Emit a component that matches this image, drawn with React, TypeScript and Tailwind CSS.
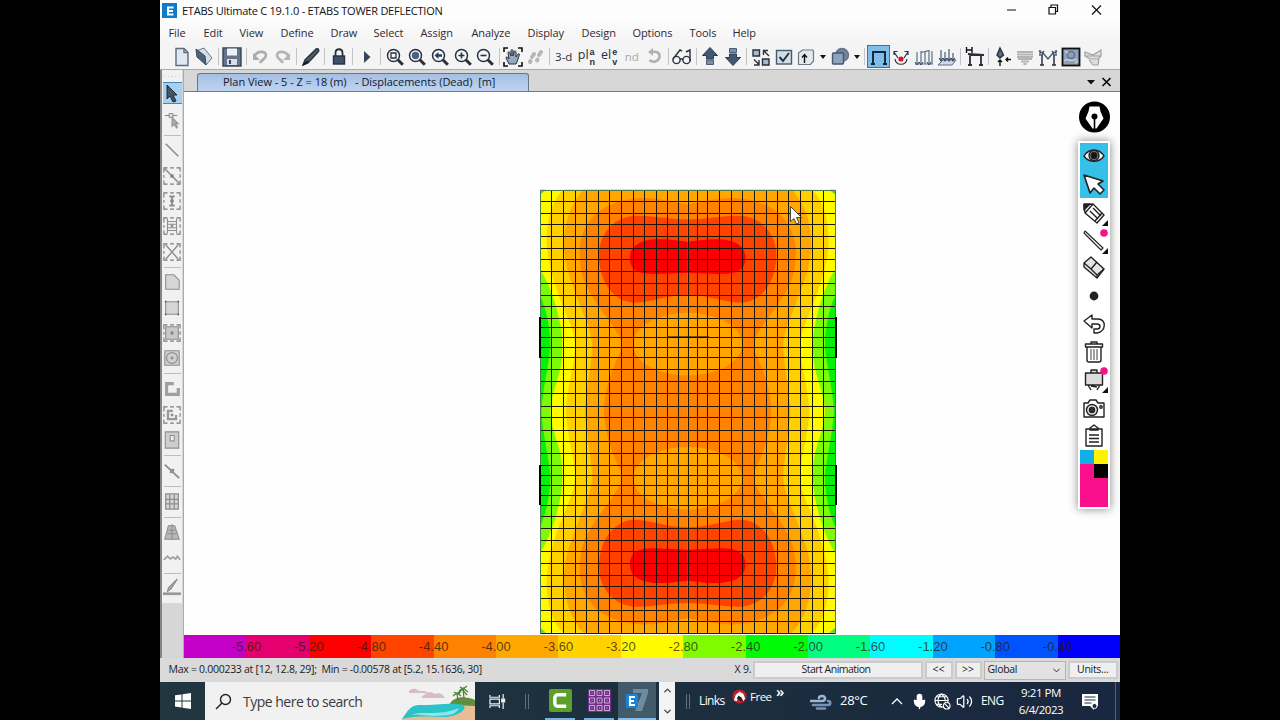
import type { ReactNode } from "react"
import { ChevronUp, ChevronDown, Mic, Volume2 } from "lucide-react"

// -------------------------
// Data
// -------------------------

const menus = [
  { label: "File", w: "w-[35px]" },
  { label: "Edit", w: "w-[36px]" },
  { label: "View", w: "w-[41px]" },
  { label: "Define", w: "w-[50px]" },
  { label: "Draw", w: "w-[43px]" },
  { label: "Select", w: "w-[47px]" },
  { label: "Assign", w: "w-[51px]" },
  { label: "Analyze", w: "w-[56px]" },
  { label: "Display", w: "w-[54px]" },
  { label: "Design", w: "w-[51px]" },
  { label: "Options", w: "w-[57px]" },
  { label: "Tools", w: "w-[43px]" },
  { label: "Help", w: "w-[30px]" }
]

const legend = [
  { bg: "bg-[#c400c8]", label: "-5.60" },
  { bg: "bg-[#e4006e]", label: "-5.20" },
  { bg: "bg-[#fd0000]", label: "-4.80" },
  { bg: "bg-[#ff4400]", label: "-4.40" },
  { bg: "bg-[#ff8200]", label: "-4.00" },
  { bg: "bg-[#ffa800]", label: "-3.60" },
  { bg: "bg-[#ffd200]", label: "-3.20" },
  { bg: "bg-[#fffc00]", label: "-2.80" },
  { bg: "bg-[#80fc00]", label: "-2.40" },
  { bg: "bg-[#00fa08]", label: "-2.00" },
  { bg: "bg-[#00ff80]", label: "-1.60" },
  { bg: "bg-[#00fcff]", label: "-1.20" },
  { bg: "bg-[#00a4ff]", label: "-0.80" },
  { bg: "bg-[#0054ff]", label: "-0.40" },
  { bg: "bg-[#0000fa]", label: "" }
]

// mesh lines, in thirds of a pixel
const gridX = [30, 64, 100, 134, 169, 205, 238, 274, 309, 343, 379, 412, 443, 473, 502, 531, 568, 602, 637, 671, 707, 742, 775, 811, 847, 880, 916]
const gridY = [29, 64, 100, 133, 169, 204, 238, 274, 308, 344, 379, 415, 442, 472, 502, 532, 566, 603, 640, 677, 712, 749, 784, 820, 856, 886, 916, 946, 975, 1009, 1045, 1079, 1114, 1148, 1186, 1219, 1253, 1289, 1323, 1359]

// -------------------------
// Small pieces
// -------------------------

function Tool({ children, active }: { children: ReactNode; active?: boolean }) {
  return (
    <div className={active
      ? "w-[22.66px] h-[23px] shrink-0 flex items-center justify-center bg-[#7fbdea] border border-[#2f78b5]"
      : "w-[22.66px] h-[23px] shrink-0 flex items-center justify-center"}>
      <svg viewBox="0 0 22 22" className="w-[22px] h-[22px] shrink-0" fill="none" stroke="#27303f" strokeWidth="1.4">
        {children}
      </svg>
    </div>
  )
}

function Sep() {
  return (
    <div className="w-[5.3px] h-[17px] shrink-0 flex justify-center">
      <div className="w-px h-full bg-[#c4c4c6]" />
    </div>
  )
}

function Caret() {
  return (
    <div className="w-[11px] shrink-0 flex justify-center">
      <svg viewBox="0 0 6 4" className="w-[6px] h-[4px]"><path d="M0 0h6L3 4z" fill="#111" /></svg>
    </div>
  )
}

function Magnifier({ children }: { children?: ReactNode }) {
  return (
    <Tool>
      <circle cx="9.5" cy="9.5" r="6" fill="#f4f6f8" strokeWidth="1.5" />
      <path d="M13.800 13.800l5 5" strokeWidth="3" />
      {children}
    </Tool>
  )
}

// view name with its last two letters stacked
function StackedLabel({ head, a, b }: { head: string; a: string; b: string }) {
  return (
    <div className="w-[22.66px] shrink-0 flex justify-center items-center text-[12.5px] leading-none text-[#27303f]">
      <span className="mt-[-2px]">{head}</span>
      <span className="ml-px flex flex-col text-[9px] leading-[10px] font-bold font-['Liberation_Sans',sans-serif]"><span>{a}</span><span>{b}</span></span>
    </div>
  )
}

function SideTool({ children, h }: { children: ReactNode; h: string }) {
  return (
    <div className={"w-[19px] shrink-0 flex items-center justify-center " + h}>
      <svg viewBox="0 0 20 20" className="w-[18px] h-[18px]" fill="none" stroke="#8d8d8d" strokeWidth="1.2">
        {children}
      </svg>
    </div>
  )
}

function SideSep() {
  return <div className="w-[17px] h-px bg-[#bcbcbc] shrink-0" />
}

function DashBox() {
  return <path d="M1 6V1h4M8 1h4M15 1h4v4M19 8v4M19 15v4h-4M12 19H8M5 19H1v-4M1 12V9" stroke="#777" />
}

function PenTool({ children, h }: { children: ReactNode; h: string }) {
  return (
    <div className={"w-full shrink-0 flex items-center justify-center " + h}>
      <svg viewBox="0 0 28 26" className="w-[28px] h-[26px] shrink-0" fill="none" stroke="#222" strokeWidth="1.4" strokeLinejoin="round">
        {children}
      </svg>
    </div>
  )
}

// -------------------------
// Contour plot
// -------------------------

function Quarter() {
  return (
    <>
      <path d="M30 29H474V694H30z" fill="#fffa00" />
      <path d="M100 29C68 60 50 110 50 190C55 260 78 330 100 380C120 430 135 460 135 500C132 570 112 610 108 694H474V29z" fill="#ffd000" />
      <path d="M160 29C122 70 100 130 102 205C106 270 130 320 150 375C172 430 186 460 186 500C184 570 168 620 165 694H474V29z" fill="#ffa600" />
      <path d="M474 73C430 66 380 52 330 54C250 60 190 90 163 150C145 190 145 240 158 290C180 360 245 420 274 480V512C258 540 225 610 222 694H474z" fill="#ff8200" />
      <path d="M30 268C55 305 78 370 88 420C98 460 100 510 92 560C82 610 64 640 61 694H30z" fill="#7dfa0a" />
      <path d="M30 345C50 390 62 450 61 500C58 550 40 610 34 694H30z" fill="#06f00c" />
      <path d="M474 118C420 118 380 108 320 107C260 107 207 155 207 225C207 310 255 366 312 368C370 366 410 345 474 345z" fill="#ff4200" />
      <path d="M474 185C450 184 430 178 385 178C335 178 300 196 300 232C300 268 318 282 375 282L474 278z" fill="#fb0000" />
      <path d="M474 398C380 400 309 440 309 494C312 545 380 586 474 586z" fill="#ffa600" />
      <path d="M30 29h18L30 44z" fill="#55dd33" />
    </>
  )
}

function Contour() {
  return (
    <svg viewBox="0 0 320 454" className="w-[320px] h-[454px] shrink-0">
      <g transform="scale(.33333)">
        <Quarter />
        <g transform="translate(946 0) scale(-1 1)"><Quarter /></g>
        <g transform="translate(0 1387) scale(1 -1)"><Quarter /></g>
        <g transform="translate(946 1387) scale(-1 -1)"><Quarter /></g>
      </g>

      {/* mesh */}
      <g fill="#1c1400" shapeRendering="crispEdges">
        {gridX.map((x) => <rect key={x} x={Math.round(x / 3)} y="10" width="1" height="444" />)}
        {gridY.map((y) => <rect key={y} x="10" y={Math.round(y / 3)} width="296" height="1" />)}
      </g>
      <path d="M10 10.500H306M10.500 10V454M305.500 10V454" stroke="#4d7a4a" fill="none" />

      {/* walls */}
      <g fill="#000">
        <rect x="9" y="137" width="2" height="41" />
        <rect x="305" y="137" width="2" height="41" />
        <rect x="9" y="285" width="2" height="40" />
        <rect x="305" y="285" width="2" height="40" />
        <rect x="138" y="156.500" width="41" height="1.500" />
      </g>

      <path d="M260.500 26.500v15l3.500-3 2.500 5.500 2.500-1-2.500-5.500h5z" fill="#fff" stroke="#222" strokeWidth=".8" />
    </svg>
  )
}

// -------------------------
// Bars
// -------------------------

function Toolbar() {
  return (
    <div className="h-[25px] pl-[10.2px] flex items-center bg-[#f4f4f5]">
      <Tool><path d="M5 2.500h8l4 4v13H5z" fill="#dfe8f1" stroke="#5d6b7c" /><path d="M13 2.500v4h4" stroke="#5d6b7c" /></Tool>
      <Tool><path d="M3 5l8-3 8 10-6 7z" fill="#d3dee9" stroke="#68788a" strokeWidth="1" /><path d="M3 3l9 7 1 9-9-8z" fill="#4c627d" stroke="#35475d" strokeWidth="1" /></Tool>
      <Sep />
      <Tool><path d="M2 2h18v18H2z" fill="#64748a" stroke="#35445a" /><path d="M6 2.500h10v7H6z" fill="#eef2f5" stroke="none" /><path d="M6 13h10v6H6z" fill="#d9dfe6" stroke="none" /><path d="M8 14h2v4H8z" fill="#35445a" stroke="none" /></Tool>
      <Sep />
      <Tool><path d="M5 11c3-7 12-6 12-2 0 4-4 4-6 8" stroke="#a9abad" strokeWidth="2.600" /><path d="M4 7v7h7z" fill="#a9abad" stroke="none" /></Tool>
      <Tool><path d="M17 11C14 4 5 5 5 9c0 4 4 4 6 8" stroke="#b1b3b5" strokeWidth="2.600" /><path d="M18 7v7h-7z" fill="#b1b3b5" stroke="none" /></Tool>
      <Sep />
      <Tool><path d="M3 19l2-5L16 3c2-1 4 1 2 3L8 17z" fill="#4c5a6c" /><path d="M3 19l5-4" stroke="#111" /></Tool>
      <Sep />
      <Tool><rect x="5.500" y="10" width="11" height="8" fill="#3d536d" /><path d="M7.500 10V7c0-5 7-5 7 0v3" strokeWidth="1.800" /></Tool>
      <Sep />
      <Tool><path d="M8 5l6.500 6L8 17z" fill="#34475f" stroke="none" /></Tool>
      <Sep />
      <Magnifier><path d="M7 7h5v5H7z" strokeWidth="1.300" /></Magnifier>
      <Magnifier><circle cx="9.500" cy="9.500" r="3" fill="#4b627d" stroke="#4b627d" /></Magnifier>
      <Magnifier><path d="M5.500 9.500l4-3.500v2.300h3.500v2.400H9.500V13z" fill="#27405f" stroke="none" /></Magnifier>
      <Magnifier><path d="M6.500 9.500h6M9.500 6.500v6" strokeWidth="1.600" /></Magnifier>
      <Magnifier><path d="M6.500 9.500h6" strokeWidth="1.600" /></Magnifier>
      <Sep />
      <Tool>
        <path d="M2 6V2h4M16 2h4v4M20 16v4h-4M6 20H2v-4" stroke="#111" strokeWidth="1.600" />
        <path d="M7 18l-3-6c0-2 2-1 3 1L6 7c0-2 2-1 2 0l1 3V5c0-2 2-2 2 0v5l1-4c0-2 2-1 2 0v5l2-3c1-1 2 0 1 2l-2 6-1 2z" fill="#98a9bd" strokeWidth="1" />
      </Tool>
      <Tool><path d="M7 11l2-3M14 9l2-3M5 16l.500-1M12 14.500l.500-1" stroke="#b7b7b8" strokeWidth="4" strokeLinecap="round" /></Tool>
      <Sep />
      <div className="w-[22.66px] shrink-0 text-center text-[11.5px] text-[#27303f]">3-d</div>
      <StackedLabel head="pl" a="a" b="n" />
      <StackedLabel head="el" a="e" b="v" />
      <div className="w-[22.66px] shrink-0 text-center text-[11.5px] text-[#a9a9aa]">nd</div>
      <Tool><path d="M9 6c5-1 8 1 7.500 5-1 5-7 6-10 3" stroke="#b0b0b1" strokeWidth="2.600" /><path d="M10 2v8L5 6z" fill="#b0b0b1" stroke="none" /></Tool>
      <Sep />
      <Tool><circle cx="5.500" cy="14" r="3.600" /><circle cx="15.500" cy="14" r="3.600" /><path d="M2 13l7-9 2 1M9 13h3M19 15V4l-4 2" /></Tool>
      <Sep />
      <Tool><path d="M11 1.500l7.500 8h-4V13h-7V9.500h-4z" fill="#435873" stroke="#2b3a4e" strokeWidth="1" /><path d="M7.500 14h7v4.500h-7z" fill="#7b8fa8" stroke="#4b5f79" strokeWidth="1" /></Tool>
      <Tool>
        <path d="M7.500 2.500h7v4h-7z" fill="#7b8fa8" stroke="#4b5f79" strokeWidth="1" />
        <path d="M11 19.500l7.500-8h-4V8h-7v3.500h-4z" fill="#435873" stroke="#2b3a4e" strokeWidth="1" />
      </Tool>
      <Sep />
      <Tool><path d="M3 4h6.500v6H3zM12.500 13h6.500v6h-6.500z" fill="#a9b9cb" /><path d="M19 10l-5-5M13.500 9V4.500H18M4 13.500l4.500 4.500M9 14v5H4" /></Tool>
      <Tool><rect x="3.500" y="4.500" width="15" height="13.500" fill="#cfdde7" stroke="#46596c" /><path d="M6.500 11l3.500 4 6-8" strokeWidth="2" /></Tool>
      <Tool><path d="M3.500 7l4-3h10l1 1v10l-3 3.500h-12z" fill="#e2e9ef" stroke="#6c7987" strokeWidth="1.200" /><path d="M9.500 17V9M7 11.500L9.500 8.500l2.500 3" stroke="#111" /></Tool>
      <Caret />
      <Tool><circle cx="13" cy="9" r="6.500" fill="#71849c" stroke="#62748c" /><rect x="3.500" y="7" width="11" height="11" rx="1" fill="#8fa3ba" stroke="#45586f" /></Tool>
      <Caret />
      <Sep />
      <Tool active><path d="M3 18h4M15 18h4M5 18V6h12v12" strokeWidth="1.900" stroke="#162638" /></Tool>
      <Tool><path d="M4 6l4 6M18 6l-4 6M4 9V5.500h3.500M18 9V5.500h-3.500" strokeWidth="1.200" /><path d="M5 13c1 7 11 7 12 0" strokeWidth="1.200" /><circle cx="11" cy="13" r="1.900" fill="#d5122a" stroke="#d5122a" /></Tool>
      <Tool><path d="M2 18h18M4 18V6M8 18V5M12 18V5M16 18V4M8 6c3 1 5-2 8-1M19 18V5" stroke="#5c6f87" strokeWidth="1.200" /><path d="M2 16l2 3 2-3M6 16l2 3 2-3M14 16l2 3 2-3" stroke="#34475f" strokeWidth="1" /></Tool>
      <Tool><path d="M2 19l5-5h13l-4 5z" fill="#cfd9e4" stroke="#5c6f87" strokeWidth="1" /><path d="M5 4v11M9 6v9M13 3v12M17 7v8M3 12l2 3 2-3M7 12l2 3 2-3M11 12l2 3 2-3M15 12l2 3 2-3" stroke="#3b4e67" strokeWidth="1.100" /></Tool>
      <Sep />
      <Tool><path d="M2.500 1v6M8 1v6M2.500 4h5.500" stroke="#111" /><path d="M6 19V9h11v10M4 19h4M15 19h4M4 8l16 1" strokeWidth="1.800" /></Tool>
      <Sep />
      <Tool><path d="M8 2l3.500 7L8 12 5 9z" fill="#596a7d" /><path d="M8 20v-6M6 16l2-2 2 2M19 13.500h-5M16 11.500l-2 2 2 2" stroke="#111" /></Tool>
      <Tool><path d="M3 6h16M3 8.500h16M3 11h16M4 13h14M7 15.500h8M9.500 18h3" stroke="#b4b4b5" strokeWidth="1.900" /></Tool>
      <Tool><path d="M5 19V8M17 19V8M3 19h4M15 19h4" strokeWidth="1.500" /><path d="M2 5l4 2 5 6 5-6 4-2M5 8l2-3M17 8l-2-3M3 4v6M19 4v6" stroke="#3d5a72" /></Tool>
      <Tool><rect x="2.500" y="2.500" width="17" height="17" fill="#8ea1b8" stroke="#111" strokeWidth="1.800" /><circle cx="11" cy="9" r="3.500" stroke="#5b708a" /><path d="M4 15c3-4 7 2 13-2M5 5l3 2M15 17l3-2" stroke="#c9d3df" /></Tool>
      <Tool><path d="M3 6l8 3 8-5v6H3zM3 10l5 3h8l3-3M7 14l4 5h5l1-6" fill="#dededf" stroke="#a2a2a3" strokeWidth="1.200" /></Tool>
    </div>
  )
}

function Sidebar() {
  return (
    <div className="w-[24px] shrink-0 flex flex-col items-start bg-[#d6d6d6] border-l-2 border-l-[#858588] border-r border-r-[#aaaaab]">
      <div className="w-[20px] h-[533px] shrink-0 flex flex-col items-center bg-[#f1f1f1]">
        <div className="h-[12px] pt-[5px] shrink-0 text-[#aaa] text-[7px] leading-[3px]">· · · · ·</div>
        <div className="w-[19px] h-[22px] shrink-0 bg-[#a5d0f0] border-y border-[#4387bd] flex justify-center items-center">
          <svg viewBox="0 0 12 19" className="w-[12px] h-[19px]"><path d="M1 1v14l3-3 3 6 3-1-3-6h4z" fill="#45566b" stroke="#1e2938" /></svg>
        </div>
        <SideTool h="h-[31px]"><path d="M2 5h14" /><rect x="7" y="3" width="4" height="4" fill="#eee" /><path d="M10 7v10l3-2 2 4 1-1-2-4h3z" fill="#aaa" stroke="#999" /></SideTool>
        <SideSep />
        <SideTool h="h-[27px]"><path d="M3 3l14 14" strokeWidth="1.800" /></SideTool>
        <SideTool h="h-[25px]"><DashBox /><path d="M2 2l16 16" strokeWidth="1.800" /><circle cx="10" cy="10" r="1.500" fill="#777" /></SideTool>
        <SideTool h="h-[25px]"><DashBox /><path d="M7 5h6M7 15h6M10 5v10" strokeWidth="2" /><circle cx="10" cy="10" r="1.500" fill="#777" /></SideTool>
        <SideTool h="h-[26px]"><DashBox /><path d="M5 2v16M15 2v16M5 5h10M5 8h10M5 12h10M5 15h10" /><circle cx="10" cy="10" r="1" /></SideTool>
        <SideTool h="h-[25px]"><DashBox /><path d="M3 2l14 16M17 2L3 18" strokeWidth="1.500" /></SideTool>
        <div className="h-[3px] shrink-0" />
        <SideSep />
        <SideTool h="h-[28px]"><path d="M3 2h9l6 6v10H3z" fill="#d6d6d6" /></SideTool>
        <SideTool h="h-[24px]"><path d="M3 3h14v14H3z" fill="#d6d6d6" /><path d="M2 3h2M16 3h2M2 17h2M16 17h2" stroke="#666" strokeWidth="2" /></SideTool>
        <SideTool h="h-[25px]"><DashBox /><path d="M3 3h14v14H3z" fill="#c8c8c8" /><circle cx="10" cy="10" r="1.300" fill="#777" /></SideTool>
        <SideTool h="h-[26px]"><path d="M2 2h16v16H2z" fill="#d0d0d0" /><circle cx="10" cy="10" r="6" /><circle cx="10" cy="10" r="1" fill="#777" /></SideTool>
        <div className="h-[2px] shrink-0" />
        <SideSep />
        <SideTool h="h-[29px]"><path d="M12 4H4v12h13V9" stroke="#a0a0a0" strokeWidth="3.500" /></SideTool>
        <SideTool h="h-[24px]"><DashBox /><path d="M11 5.500H5.500v9h9V10" stroke="#999" strokeWidth="2.600" /><circle cx="10" cy="10" r="1" fill="#777" /></SideTool>
        <SideTool h="h-[25px]"><path d="M2.500 1h15v18h-15z" fill="#cecece" /><rect x="8" y="5" width="4.500" height="6" fill="#eee" /></SideTool>
        <div className="h-[3px] shrink-0" />
        <SideSep />
        <SideTool h="h-[30px]"><path d="M2 3l16 15M12 8l-4 4" strokeWidth="2" /><circle cx="10" cy="10" r="1.800" fill="#999" /></SideTool>
        <SideSep />
        <SideTool h="h-[30px]"><path d="M3 1h14v17H3zM7.500 1v17M12.500 1v17M3 7h14M3 12h14" fill="#d6d6d6" strokeWidth="1.400" /></SideTool>
        <SideSep />
        <SideTool h="h-[28px]"><path d="M6 3h7l5 15H2z" fill="#b8b8b8" /><path d="M10 1v18M6 8h8M5 12h10" /></SideTool>
        <SideTool h="h-[23px]"><path d="M1 12l4-4 3 3 3-2 3 2 2-3 3 4" stroke="#a0a0a0" strokeWidth="2" /></SideTool>
        <div className="h-[4px] shrink-0" />
        <SideSep />
        <SideTool h="h-[26px]"><path d="M16 1L6 11l-1 4 4-3z" fill="#aaa" /><path d="M0 17.500h20" stroke="#999" strokeWidth="3" /></SideTool>
      </div>
    </div>
  )
}

function PenPalette() {
  return (
    <div className="absolute left-[893px] top-[9px] w-[34px] flex flex-col items-center">
      <svg viewBox="0 0 32 32" className="w-[32px] h-[32px]">
        <circle cx="16.500" cy="16" r="15.500" fill="#000" />
        <path d="M11.500 5.500h10l1 5 3 7-7 10h-4l-7-10 3-7z" fill="#fff" />
        <path d="M16.500 17v12" stroke="#000" strokeWidth="1.600" />
        <circle cx="16.500" cy="15.500" r="3" fill="#000" />
      </svg>
      <div className="mt-[8px] w-[32px] h-[368px] border-2 border-white bg-white shadow-[0_0_9px_#888] flex flex-col items-center">
        <div className="w-full h-[55px] shrink-0 bg-[#35bfe9]">
          <PenTool h="h-[26px]">
            <path d="M4 13c5-8 15-8 20 0-5 7-15 7-20 0z" fill="#fff" />
            <circle cx="14" cy="12.500" r="5" fill="#aaa" /><circle cx="14" cy="12.500" r="3" fill="#111" />
          </PenTool>
          <PenTool h="h-[30px]"><path d="M4 4l6 18 4-5 6 6 4-4-6-6 5-3z" fill="#fff" strokeWidth="1.600" /></PenTool>
        </div>
        <PenTool h="h-[30px]"><path d="M4 5l9-1 11 11-7 8L5 13z" fill="#fff" /><path d="M4 4l6 0-6 6z" fill="#222" /><path d="M5 13l8-9M10 11l8 8M13 8l8 8M15 21l7-8" /><path d="M28 20v6h-6z" fill="#111" stroke="none" /></PenTool>
        <PenTool h="h-[26px]"><path d="M5 3L23 20l-2 2L4 5z" fill="#fff" strokeWidth="1.100" /><circle cx="24" cy="5" r="3.800" fill="#f31587" stroke="none" /><path d="M28 20v6h-6z" fill="#111" stroke="none" /></PenTool>
        <PenTool h="h-[28px]"><path d="M4 8l7-6 13 12-7 9L4 12z" fill="#e4e4e4" /><path d="M11 14l6-7M4 8l7 6 6 6 7-6M17 20v3" /></PenTool>
        <PenTool h="h-[28px]"><circle cx="14" cy="13" r="4.400" fill="#222" stroke="none" /></PenTool>
        <PenTool h="h-[28px]"><path d="M4 10l8-6v4h6c9 0 8 13-1 14h-3v-4h3c4 0 4-5 0-5h-5v4z" fill="#fff" /></PenTool>
        <PenTool h="h-[28px]"><path d="M7 8h14v13c0 2-1 2-2 2H9c-2 0-2-1-2-2zM5.500 5h17v3h-17zM11 5V3h6v2" fill="#fff" /><path d="M11 10v11M14 10v11M17 10v11" stroke="#777" /></PenTool>
        <PenTool h="h-[28px]"><path d="M5.500 6h17v12h-17zM11 6V3h6v3M8 18l3 5M20 18l-3 5M11 19l6 1" fill="#ddd" /><circle cx="24" cy="4" r="3.800" fill="#f31587" stroke="none" /><path d="M28 20v6h-6z" fill="#111" stroke="none" /></PenTool>
        <PenTool h="h-[28px]"><path d="M4 8h4l2-3h6l2 3h6v14H4z" fill="#fff" /><circle cx="12" cy="15" r="5.500" fill="#ddd" /><circle cx="12" cy="15" r="2.500" fill="#333" /><circle cx="21" cy="12" r="1.200" /></PenTool>
        <PenTool h="h-[28px]"><path d="M6 6h16v17H6zM10 7V5l4-3 4 3v2z" fill="#fff" /><path d="M9 12h10M9 15.500h10M9 19h10" /></PenTool>
        <div className="w-full grow grid grid-cols-2 grid-rows-[14px_14px_1fr] bg-[#fa0f8c]">
          <div className="bg-[#13ade8]" />
          <div className="bg-[#fff200]" />
          <div />
          <div className="bg-black" />
        </div>
      </div>
    </div>
  )
}

function Legend() {
  return (
    <div className="h-[23px] flex shrink-0">
      {legend.map((l, i) => (
        <div key={i} className={"relative flex-1 " + l.bg}>
          {l.label && (
            <div className="absolute z-10 right-[-16px] w-[32px] text-center top-0 leading-[23px] text-[13px] text-[#2b1808]/75 font-['Liberation_Sans',sans-serif]">{l.label}</div>
          )}
        </div>
      ))}
    </div>
  )
}

function StatusBar() {
  const btn = "h-[18px] bg-[#efefef] border-2 border-[#cbcbcb] flex items-center justify-center"
  return (
    <div className="h-[24px] pl-[8.5px] pr-[2px] flex items-center bg-[#dadada] text-[10.5px] text-[#1b1b1b] whitespace-pre">
      <span className="w-[566px] shrink-0 tracking-[-0.28px]">Max = 0.000233 at [12, 12.8, 29];  Min = -0.00578 at [5.2, 15.1636, 30]</span>
      <span className="w-[18px] shrink-0 tracking-[-0.2px]">X 9.</span>
      <div className={btn + " w-[170px] pr-[3px] tracking-[-0.5px]"}>Start Animation</div>
      <div className={btn + " w-[28px] ml-[2px]"}>&lt;&lt;</div>
      <div className={btn + " w-[27px] ml-[2px]"}>&gt;&gt;</div>
      <div className="w-[82px] h-[19px] ml-[2px] pl-[3px] pr-[3px] bg-[#e2e2e2] border border-[#b4b4b4] flex items-center justify-between tracking-[-0.3px]">
        Global
        <ChevronDown className="w-[11px] h-[11px]" strokeWidth={2} />
      </div>
      <div className={btn + " flex-1 ml-[2px] tracking-[-0.3px]"}>Units...</div>
    </div>
  )
}

function Taskbar() {
  return (
    <div className="h-[38px] flex bg-linear-to-r from-[#203740] via-[#1d2f3d] to-[#192740] text-white">
      <div className="w-[45px] shrink-0 flex items-center justify-center">
        <svg viewBox="0 0 16 16" className="w-[16px] h-[16px]" fill="#fff"><path d="M0 2.300l6.500-.9v6H0zM7.500 1.200L16 0v7.400H7.500zM0 8.400h6.500v6.100L0 13.600zM7.500 8.400H16V16l-8.500-1.200z" /></svg>
      </div>
      <div className="w-[270px] shrink-0 flex items-center bg-[#f1f1f1] text-[#3b3b3b] overflow-hidden">
        <svg viewBox="0 0 17 17" className="w-[17px] h-[17px] ml-[10px] shrink-0" fill="none" stroke="#222" strokeWidth="1.400"><circle cx="10.500" cy="6.500" r="5" /><path d="M7 10l-6 6" /></svg>
        <span className="ml-[11px] w-[158px] shrink-0 text-[14px] tracking-[-0.5px]">Type here to search</span>
        <svg viewBox="0 0 74 38" className="w-[74px] h-[38px] shrink-0">
          <path d="M8 9c4-4 8-2 10 0h6l3 2H8zM21 15c3-5 9-6 13-3 4-2 8 0 10 4H20z" fill="#d8bdc0" />
          <path d="M48 23c4-8 15-10 26-5v9H48z" fill="#5f8f3c" />
          <path d="M0 38c8-7 20-9 34-9l18-6 22 1v14z" fill="#e8bd95" />
          <path d="M1 37c6-9 9-15 20-14 14 0 30-3 42 0 3 6-8 11-18 12-14 0-28-2-44 2z" fill="#2bc3ca" />
          <path d="M10 33c12-5 26 2 48-7-4 9-16 7-24 8-8 0-14-2-24-1z" fill="#8be8e4" />
          <path d="M57 18l-1-6M63 16l-1-9" stroke="#8a5a35" strokeWidth="1.200" />
          <path d="M52 14l4-3 4 3M53 10l3 2 3-3M58 9l4-3 5 4M59 5l3 2 4-3M58 12l3-5 5 6" stroke="#3f8a33" strokeWidth="1.300" fill="none" />
        </svg>
      </div>

      <div className="w-[44px] shrink-0 flex items-center justify-center">
        <svg viewBox="0 0 18 18" className="w-[17px] h-[17px]" fill="none" stroke="#eee" strokeWidth="1.300"><path d="M1 2v2.500h10V2M1 16v-2.500h10V16M1 6.500h10v5H1zM15 1v5M15 10v7" /><path d="M13.500 6.500h3v3h-3z" fill="#eee" /></svg>
      </div>
      <div className="w-[22px] shrink-0 flex items-center pl-[6px]"><div className="w-[4px] h-[15px] border-x border-[#60707b]" /></div>
      <div className="w-[39px] pr-px shrink-0 flex flex-col items-center justify-between pt-[7px]">
        <div className="w-[23px] h-[23px] bg-[#5aa02a] rounded-[2px] flex items-center justify-center">
          <svg viewBox="0 0 20 20" className="w-[19px] h-[19px]"><path d="M16 4H8C5 4 4 5 4 8v4c0 3 1 4 4 4h8" stroke="#fff" strokeWidth="3.600" fill="none" /></svg>
        </div>
        <div className="w-[30px] h-[2px] bg-[#76b2e6]" />
      </div>
      <div className="w-[38px] shrink-0 flex flex-col items-center justify-between pt-[7px]">
        <svg viewBox="0 0 23 23" className="w-[23px] h-[23px]">
          <rect width="23" height="23" fill="#6f3287" />
          {[1.5, 9, 16.5].map((y) => [1.5, 9, 16.5].map((x) => (
            <path key={x + "-" + y} d={`M${x} ${y}h5v5h-5zM${x + 2} ${y + 2.5}h1`} fill="none" stroke="#cda6d8" strokeWidth="1" />
          )))}
        </svg>
        <div className="w-[30px] h-[2px] bg-[#76b2e6]" />
      </div>
      <div className="w-[38px] shrink-0 flex flex-col items-center justify-between pt-[6px] bg-[#425a69]">
        <svg viewBox="0 0 24 24" className="w-[24px] h-[24px]">
          <path d="M8 1h15v4l-6 18h-7l7-18H8z" fill="#6e8ca0" />
          <rect x="1" y="6" width="12" height="14" rx="1" fill="#1684dc" />
          <path d="M10 9H5v8h5M5 13h4" stroke="#fff" strokeWidth="2" fill="none" />
        </svg>
        <div className="w-[38px] h-[2px] bg-[#85bdf0]" />
      </div>
      <div className="w-[3px] shrink-0" />
      <div className="w-[16px] shrink-0 bg-[#f3f3f3] text-[#444] flex flex-col items-center justify-between py-[3px]">
        <ChevronUp className="w-[11px] h-[11px]" strokeWidth={3} />
        <ChevronDown className="w-[11px] h-[11px]" strokeWidth={3} />
      </div>
      <div className="w-[24px] shrink-0 flex items-center pl-[11px]"><div className="w-[4px] h-[15px] border-x border-[#60707b]" /></div>
      <span className="w-[33px] shrink-0 self-center text-[12px] tracking-[-0.6px]">Links</span>
      <svg viewBox="0 0 16 16" className="w-[15px] h-[15px] mt-[7px] shrink-0"><circle cx="8" cy="8" r="7.500" fill="#c41d2a" /><path d="M2 12l2-6 4-3 4 2 2 5-2 3-2-4H7l-2 4z" fill="#fff" /><path d="M5 10l2-3 3 2 2 5-4-2z" fill="#222" /></svg>
      <span className="w-[26px] ml-[3px] mt-[6px] shrink-0 text-[11.5px] leading-[17px] tracking-[-0.5px]">Free</span>
      <span className="w-[34px] mt-[-1px] shrink-0 text-[15px] leading-[20px] font-semibold">»</span>

      {/* weather */}
      <svg viewBox="0 0 22 16" className="w-[22px] h-[16px] mt-[12px] shrink-0" fill="none" stroke="#9db6d2" strokeWidth="2.600" strokeLinecap="round">
        <path d="M1 7h11c4 0 4-5 0-5-2 0-3 1-3 2" />
        <path d="M3 11h15c3 0 3-4 0-4M7 14.500h8" stroke="#7393bb" />
      </svg>
      <span className="w-[51px] ml-[8px] shrink-0 self-center text-[13px] tracking-[-0.3px]">28°C</span>

      <svg viewBox="0 0 12 7" className="w-[12px] h-[7px] mt-[16px] shrink-0" fill="none" stroke="#fff" strokeWidth="1.300"><path d="M1 6l5-5 5 5" /></svg>
      <Mic className="w-[17px] h-[17px] ml-[8px] mt-[11px] shrink-0" fill="#fff" strokeWidth={2} />
      <svg viewBox="0 0 18 18" className="w-[17px] h-[17px] ml-[6px] mt-[11px] shrink-0" fill="none" stroke="#fff" strokeWidth="1.200">
        <circle cx="8" cy="8" r="7" /><path d="M1 8h14M2.500 4h11M2.500 12h6M8 1c-5 4-5 10 0 14M8 1c4 3 4 6 4 8" />
        <circle cx="13.500" cy="13.500" r="3.500" fill="#1a2a3e" /><path d="M11 11l5 5" />
      </svg>
      <Volume2 className="w-[17px] h-[17px] ml-[5px] mt-[11px] shrink-0" strokeWidth={1.800} />
      <span className="w-[37px] ml-[8px] shrink-0 self-center text-[12px] tracking-[-0.6px]">ENG</span>
      <div className="w-[46px] shrink-0 flex flex-col justify-center text-center text-[11.500px] leading-[17px] tracking-[-0.45px] whitespace-nowrap">
        <span>9:21 PM</span>
        <span>6/4/2023</span>
      </div>
      <svg viewBox="0 0 16 16" className="w-[16px] h-[16px] ml-[18px] mt-[12px] shrink-0"><path d="M0 0h16v12h-4v4l-4-4H0z" fill="#fff" /><path d="M2.500 3h11M2.500 6h11M2.500 9h7" stroke="#1a2a40" /><circle cx="12.500" cy="12" r="2.500" fill="#1a2a40" stroke="#fff" /></svg>
      <div className="ml-auto mr-[4px] w-px h-full bg-[#51607a]" />
    </div>
  )
}

export default function App() {

  return (

    <main className="w-[1280px] h-[720px] overflow-hidden bg-black flex justify-center font-['Open_Sans','Noto_Sans',sans-serif]">

      <div className="w-[960px] h-[720px] flex flex-col bg-[#f4f4f5]">

        {/* title */}
        <div className="h-[22px] shrink-0 flex items-center bg-[#fdfdfd] text-[#111]">
          <div className="w-[15px] h-[15px] ml-[2px] mb-px bg-[#0d7bc9] flex items-center justify-center">
            <svg viewBox="0 0 10 10" className="w-[10px] h-[10px]"><path d="M8.500 1.500H3v7h5.500M3 5h5" stroke="#fff" strokeWidth="2" fill="none" /></svg>
          </div>
          <span className="ml-[5px] w-[821px] shrink-0 text-[11px] tracking-[-0.24px]">ETABS Ultimate C 19.1.0 - ETABS TOWER DEFLECTION</span>
          <svg viewBox="0 0 100 12" className="w-[100px] h-[12px] mb-[2px] ml-[-1px]" fill="none" stroke="#111" strokeWidth="1.200">
            <path d="M5 6h9M90 1.500l9 9M99 1.500l-9 9" />
            <path d="M47 3.500h6.500V10H47zM49 3.500V1h6.500v6.500H53.500" />
          </svg>
        </div>

        {/* menu */}
        <div className="h-[22px] pl-[8.500px] shrink-0 flex items-center bg-linear-to-b from-[#fbfbfb] to-[#f4f4f5] text-[11px] tracking-[-0.1px] text-[#33282f]">
          {menus.map((m) => (
            <span key={m.label} className={"shrink-0 " + m.w}>{m.label}</span>
          ))}
        </div>

        <Toolbar />

        <div className="h-[589px] shrink-0 flex border-t border-[#a9a9aa]">

          <Sidebar />

          <div className="flex-1 min-w-0 flex flex-col">

            <div className="h-[22px] pl-[13px] pr-[9px] pt-[3px] shrink-0 flex bg-[#d7d7d7] border-b border-[#77777a]">
              <div className="w-[332px] h-[18px] pl-[25px] flex items-center rounded-t-[3px] border border-b-0 border-[#65768d] bg-linear-to-b from-[#a5bfe4] to-[#bfd3ef] text-[11px] tracking-[-0.03px] text-[#0f1b2d] whitespace-pre">Plan View - 5 - Z = 18 (m)   - Displacements (Dead)  [m]</div>
              <svg viewBox="0 0 24 12" className="w-[24px] h-[12px] ml-auto mt-[3px]"><path d="M0 4h8L4 8.500z" fill="#111" /><path d="M15.500 2l8 8M23.500 2l-8 8" stroke="#111" strokeWidth="1.700" /></svg>
            </div>

            <div className="relative h-[543px] shrink-0 pl-[346px] pt-[88px] bg-[#fefefe]">
              <Contour />
              <PenPalette />
            </div>

            <Legend />
          </div>
        </div>

        <StatusBar />
        <Taskbar />
      </div>

    </main>

  )

}
